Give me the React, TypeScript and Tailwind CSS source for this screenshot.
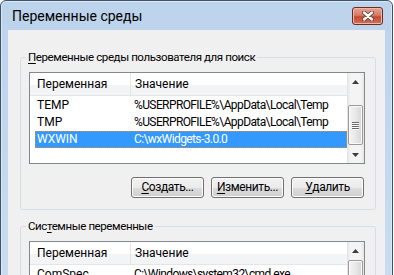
import React from "react";

type Row = { name: string; value: string; selected?: boolean };

const userRows: Row[] = [
  { name: "TEMP", value: "%USERPROFILE%\\AppData\\Local\\Temp" },
  { name: "TMP", value: "%USERPROFILE%\\AppData\\Local\\Temp" },
  { name: "WXWIN", value: "C:\\wxWidgets-3.0.0", selected: true },
];

const systemRows: Row[] = [{ name: "ComSpec", value: "C:\\Windows\\system32\\cmd.exe" }];

function Arrow({ up }: { up?: boolean }) {
  return (
    <svg width="7" height="4" viewBox="0 0 7 4">
      <path d={up ? "M0 4 L3.5 0 L7 4 Z" : "M0 0 L3.5 4 L7 0 Z"} fill="#3d3d3d" />
    </svg>
  );
}

function ScrollBar({ thumbTop, thumbHeight }: { thumbTop: number; thumbHeight: number }) {
  return (
    <div className="flex w-[17px] shrink-0 flex-col bg-[linear-gradient(90deg,#e2e2e2,#f4f4f4_20%,#f4f4f4_80%,#e6e6e6)]">
      <div className="flex h-[17px] shrink-0 items-center justify-center">
        <Arrow up />
      </div>
      <div className="flex flex-1 flex-col overflow-hidden">
        <div className="shrink-0" style={{ height: thumbTop }} />
        <div
          className="mx-[1px] flex shrink-0 flex-col items-center justify-center gap-[1px] rounded-[2px] border border-[#9a9a9a] bg-[linear-gradient(90deg,#f4f4f4,#e8e8e8_50%,#d6d6d6)] shadow-[inset_0_0_0_1px_#fbfbfb]"
          style={{ height: thumbHeight }}
        >
          {[0, 1, 2, 3].map((i) => (
            <div key={i} className="h-[1px] w-[7px] bg-[#6b6b6b] shadow-[0_1px_0_#ffffff]" />
          ))}
        </div>
      </div>
      <div className="flex h-[17px] shrink-0 items-center justify-center">
        <Arrow />
      </div>
    </div>
  );
}

function ListView({
  rows,
  height,
  thumbTop,
  thumbHeight,
}: {
  rows: Row[];
  height: number;
  thumbTop: number;
  thumbHeight: number;
}) {
  return (
    <div className="flex shrink-0 border border-[#828790] bg-white" style={{ height }}>
      <div className="flex min-w-0 flex-1 flex-col overflow-hidden">
        <div className="flex h-[23px] shrink-0 border-b border-[#e5e5e5] bg-[linear-gradient(#ffffff,#ffffff_55%,#f3f4f6_55%,#f3f4f6)]">
          <div className="flex w-[101px] items-center border-r border-[#e5e5e5] pl-[7px]">Переменная</div>
          <div className="flex flex-1 items-center pl-[4px]">Значение</div>
        </div>
        <div className="flex flex-col pl-[5px] pt-[1px]">
          {rows.map((r) => (
            <div
              key={r.name}
              className={
                r.selected
                  ? "flex h-[17px] items-center border border-dotted border-[#d58a3c] bg-[#3399ff] text-white"
                  : "flex h-[17px] items-center border border-transparent"
              }
            >
              <div className="w-[97px] shrink-0 pl-[1px]">{r.name}</div>
              <div className="whitespace-nowrap pl-[1px] tracking-[-0.6px]">{r.value}</div>
            </div>
          ))}
        </div>
      </div>
      <ScrollBar thumbTop={thumbTop} thumbHeight={thumbHeight} />
    </div>
  );
}

function WinButton({ mnemonic, rest }: { mnemonic: string; rest: string }) {
  return (
    <button className="flex h-[21px] w-[73px] items-center justify-center rounded-[3px] border border-[#707070] bg-[linear-gradient(#f2f2f2,#ebebeb_50%,#dddddd_50%,#cfcfcf)] text-[12px] tracking-[-0.4px] text-black shadow-[inset_0_0_0_1px_#fcfcfc]">
      <span className="underline underline-offset-2">{mnemonic}</span>
      {rest}
    </button>
  );
}

function CloseButton() {
  return (
    <div className="flex h-[18px] w-[31px] items-center justify-center rounded-[3px] border border-[#6b2a22] bg-[linear-gradient(#e8a593,#d67b64_45%,#c44a32_55%,#d0705a)] shadow-[inset_0_0_0_1px_#eeb8a8]">
      <svg width="14" height="10" viewBox="0 0 14 10">
        <path d="M3 1.5 L11 8.5 M11 1.5 L3 8.5" stroke="#5b3a36" strokeWidth="4" strokeLinecap="round" />
        <path d="M3 1.5 L11 8.5 M11 1.5 L3 8.5" stroke="#ffffff" strokeWidth="2.4" strokeLinecap="round" />
      </svg>
    </div>
  );
}

export default function App() {
  return (
    <div className="h-[275px] w-[394px] overflow-hidden bg-white font-['Segoe_UI',Roboto,sans-serif] text-[12px] leading-[15px] text-black">
      <div className="flex h-[290px] w-[393px] flex-col rounded-t-[6px] border border-[#3f5266] bg-[linear-gradient(#bcd3ec,#c9dcf1)] shadow-[inset_0_0_0_1px_#d9e7f6]">
        <div className="flex h-[29px] shrink-0 items-center justify-between pl-[11px] pr-[9px]">
          <span className="text-[14px] leading-[18px]">Переменные среды</span>
          <CloseButton />
        </div>
        <div className="mx-[7px] flex flex-1 flex-col bg-[#f0f0f0] pl-[12px] pr-[9px] pt-[20px]">
          <fieldset className="rounded-[3px] border border-[#d5dfe5]">
            <legend className="ml-[5px] px-[2px] text-[11.5px] tracking-[-0.4px]">
              <span className="underline underline-offset-2">П</span>еременные среды пользователя для поиск
            </legend>
            <div className="mt-[7px] flex flex-col pb-[11px] pl-[8px] pr-[10px]">
              <ListView rows={userRows} height={92} thumbTop={15} thumbHeight={40} />
              <div className="mt-[13px] flex justify-end gap-[7px] pr-[1px]">
                <WinButton mnemonic="С" rest="оздать..." />
                <WinButton mnemonic="И" rest="зменить..." />
                <WinButton mnemonic="У" rest="далить" />
              </div>
            </div>
          </fieldset>
          <fieldset className="mt-[9px] rounded-[3px] border border-[#d5dfe5]">
            <legend className="ml-[5px] px-[2px] text-[11.5px] tracking-[-0.4px]">
              Сис<span className="underline underline-offset-2">т</span>емные переменные
            </legend>
            <div className="mt-[7px] flex flex-col pb-[11px] pl-[8px] pr-[10px]">
              <ListView rows={systemRows} height={92} thumbTop={1} thumbHeight={40} />
            </div>
          </fieldset>
        </div>
      </div>
    </div>
  );
}
